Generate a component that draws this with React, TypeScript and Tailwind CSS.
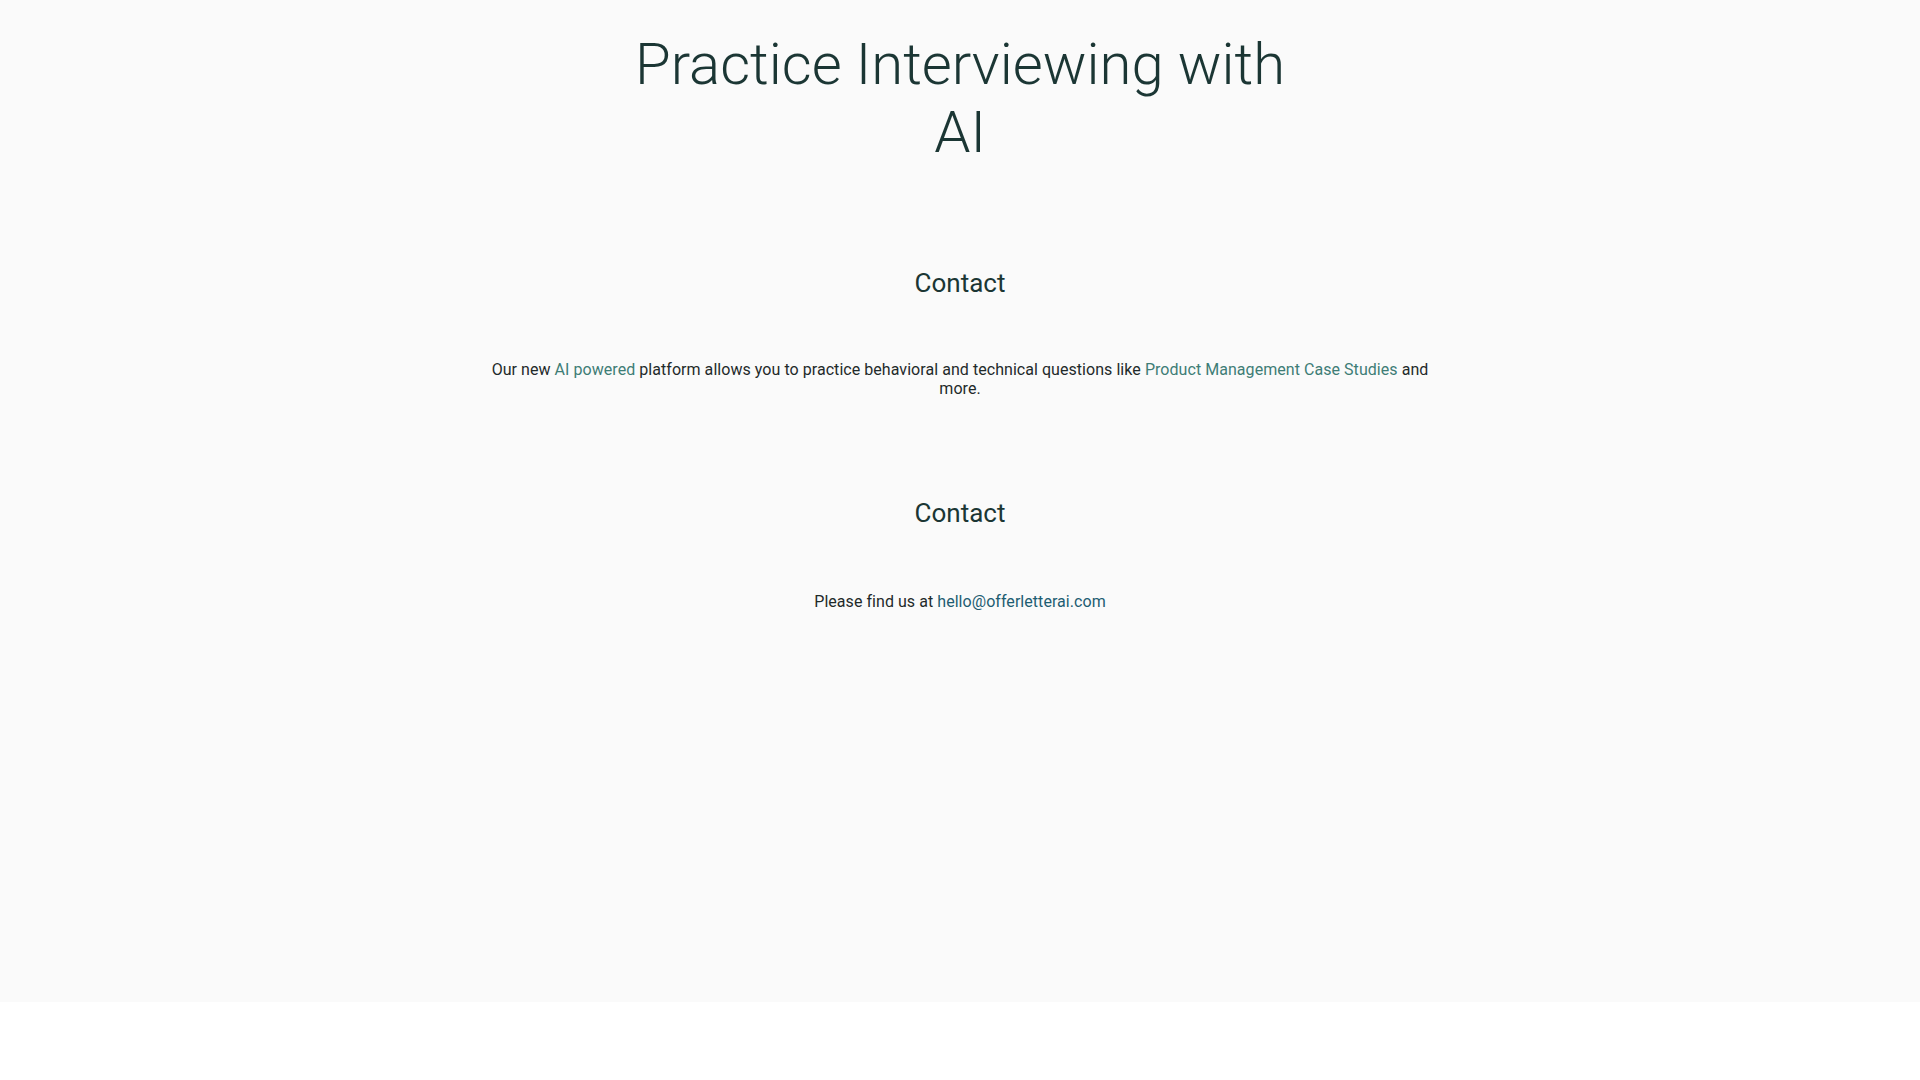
import React from "react";

export default function App() {
  return (
    <div className="w-full bg-white" style={{ fontFamily: "Roboto, 'Noto Sans', sans-serif" }}>
      <main className="bg-[#fafafa] min-h-[1002px] flex flex-col items-center">
        <h1 className="mt-[30px] w-[680px] text-center text-[58px] leading-[68px] font-light text-[#1b3634]">
          Practice Interviewing with AI
        </h1>
        <h2 className="mt-[100px] text-[26px] leading-[34px] font-normal text-[#1b3634]">Contact</h2>
        <p className="mt-[60px] w-[960px] text-center text-[16px] leading-[19px] tracking-[0.05px] text-[#1f2a2a]">
          Our new <span className="text-[#3e7d76]">AI powered</span> platform allows you to practice behavioral and
          technical questions like <span className="text-[#3e7d76]">Product Management Case Studies</span> and more.
        </p>
        <h2 className="mt-[98px] text-[26px] leading-[34px] font-normal text-[#1b3634]">Contact</h2>
        <p className="mt-[62px] text-center text-[16px] leading-[19px] tracking-[0.05px] text-[#1f2a2a]">
          Please find us at <a className="text-[#1e5d72]">hello@offerletterai.com</a>
        </p>
      </main>
    </div>
  );
}
